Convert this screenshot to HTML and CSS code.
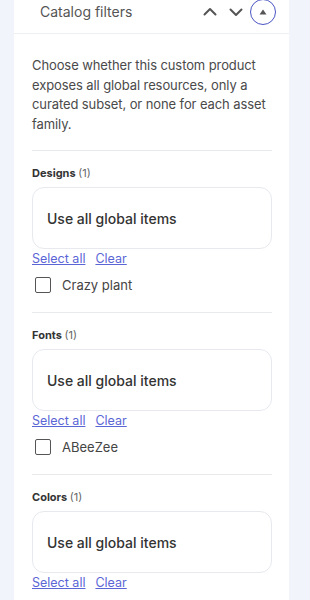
FILE: index.html
```html
<!DOCTYPE html>
<html lang="en">
<head>
  <meta charset="UTF-8" />
  <meta name="viewport" content="width=device-width, initial-scale=1" />
  <title>Catalog filters</title>
  <link rel="stylesheet" href="styles.css">
</head>
<body>
  <div class="panel">
    <div class="panel-head">
      <span class="panel-title">Catalog filters</span>
      <div class="head-tools">
        <button class="icon-btn" aria-label="Move up">
          <svg width="14" height="14" viewBox="0 0 14 14"><path d="M1.5 9.5 L7 4 L12.5 9.5" fill="none" stroke="#555" stroke-width="2" stroke-linecap="round" stroke-linejoin="round"/></svg>
        </button>
        <button class="icon-btn" aria-label="Move down">
          <svg width="14" height="14" viewBox="0 0 14 14"><path d="M1.5 4.5 L7 10 L12.5 4.5" fill="none" stroke="#555" stroke-width="2" stroke-linecap="round" stroke-linejoin="round"/></svg>
        </button>
        <button class="collapse-btn" aria-label="Collapse">
          <svg width="10" height="8" viewBox="0 0 10 8"><path d="M1.5 6.5 L5 1.5 L8.5 6.5 Z" fill="#555"/></svg>
        </button>
      </div>
    </div>

    <div class="panel-body">
      <p class="intro">Choose whether this custom product exposes all global resources, only a curated subset, or none for each asset family.</p>

      <!-- Designs -->
      <div class="family">
        <div class="family-label">Designs <span class="count">(1)</span></div>
        <div class="mode-select">Use all global items</div>
        <div class="links"><a href="#">Select all</a><a href="#">Clear</a></div>
        <label class="check-row"><span class="check-box"></span>Crazy plant</label>
      </div>

      <!-- Fonts -->
      <div class="family">
        <div class="family-label">Fonts <span class="count">(1)</span></div>
        <div class="mode-select">Use all global items</div>
        <div class="links"><a href="#">Select all</a><a href="#">Clear</a></div>
        <label class="check-row"><span class="check-box"></span>ABeeZee</label>
      </div>

      <!-- Colors -->
      <div class="family">
        <div class="family-label">Colors <span class="count">(1)</span></div>
        <div class="mode-select">Use all global items</div>
        <div class="links"><a href="#">Select all</a><a href="#">Clear</a></div>
        <label class="check-row"><span class="check-box"></span>Black</label>
      </div>
    </div>
  </div>
</body>
</html>
```

FILE: styles.css
```css
* {
  box-sizing: border-box;
  margin: 0;
  padding: 0;
}
body, html {
  width: 100%;
  height: 100%;
  font-family: Inter, "Noto Sans", sans-serif;
  background-color: #f1f4fa;
  overflow: hidden;
}
.panel {
  margin-left: 14px;
  width: 275px;
  min-height: 100%;
  background-color: #fff;
}
.panel-head {
  height: 34px;
  display: flex;
  align-items: center;
  justify-content: space-between;
  padding: 0 13px 10px 26px;
  border-bottom: 1px solid #eef0f4;
}
.panel-title {
  font-size: 14px;
  color: #555;
}
.head-tools {
  display: flex;
  align-items: center;
}
.icon-btn {
  border: none;
  background: none;
  width: 14px;
  height: 14px;
  display: flex;
  margin-right: 12px;
  cursor: pointer;
}
.collapse-btn {
  width: 26px;
  height: 26px;
  border-radius: 50%;
  border: 1.5px solid #4a55c4;
  background: #fff;
  display: flex;
  align-items: center;
  justify-content: center;
  margin-left: -5px;
  cursor: pointer;
}
.panel-body {
  padding: 22px 17px 0 18px;
}
.intro {
  font-size: 13px;
  line-height: 19.5px;
  color: #4a4a4a;
  letter-spacing: -0.1px;
  padding-bottom: 16px;
}
.family {
  border-top: 1px solid #e8eaee;
  padding: 15px 0 18px;
}
.family-label {
  font-size: 11px;
  line-height: 14px;
  font-weight: 700;
  color: #333;
}
.count {
  font-weight: 400;
  color: #666;
}
.mode-select {
  margin-top: 7px;
  height: 62px;
  border: 1px solid #e7e9ee;
  border-radius: 12px;
  display: flex;
  align-items: center;
  padding-left: 14px;
  font-size: 14px;
  font-weight: 500;
  color: #333;
}
.links {
  margin-top: 2px;
  display: flex;
  gap: 10px;
  font-size: 12.5px;
  line-height: 16px;
}
.links a {
  color: #5b66d6;
  text-decoration: underline;
}
.check-row {
  margin-top: 9px;
  height: 18px;
  display: flex;
  align-items: center;
  font-size: 13px;
  color: #444;
}
.check-box {
  width: 16px;
  height: 16px;
  border: 1.5px solid #555;
  border-radius: 2px;
  margin: 0 11px 0 3px;
}
```
